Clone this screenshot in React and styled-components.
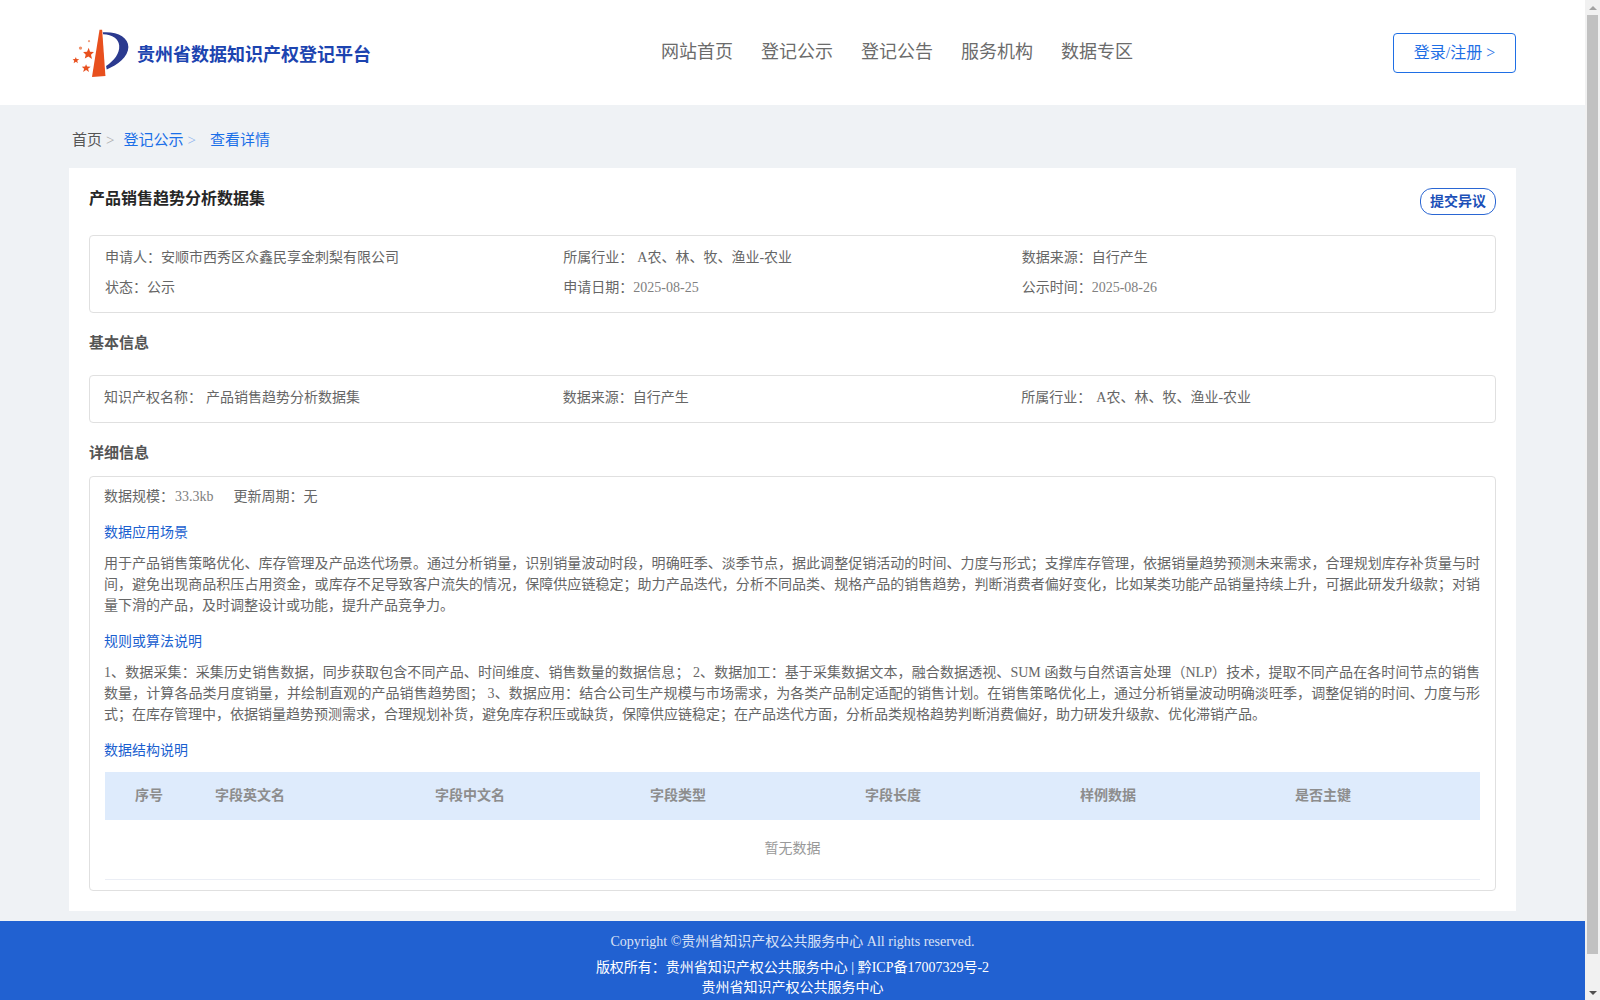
import React from "react";
import styled, { createGlobalStyle } from "styled-components";

const GlobalStyle = createGlobalStyle`
  html, body {
    margin: 0;
    padding: 0;
    background: #eff2f5;
    font-family: "Liberation Serif", "Noto Sans CJK SC", serif;
    font-size: 14px;
    color: #666;
    overflow: hidden;
  }
  * { box-sizing: border-box; }
`;

const Screen = styled.div`
  display: flex;
  width: 1600px;
  height: 1000px;
  overflow: hidden;
`;

const Page = styled.div`
  flex: 1;
  min-width: 0;
`;

// Fake scrollbar, the reference shows the classic browser one
const ScrollTrack = styled.div`
  width: 15px;
  flex: none;
  background: #f1f1f1;
  display: flex;
  flex-direction: column;
  align-items: center;
`;

const ScrollButton = styled.div`
  height: 15px;
  flex: none;
  display: flex;
  align-items: center;
  justify-content: center;
`;

const ScrollThumb = styled.div`
  width: 11px;
  height: 939px;
  background: #c1c1c1;
`;

const ScrollSpacer = styled.div`
  flex: 1;
`;

const Arrow = styled.div`
  width: 0;
  height: 0;
  border-left: 4px solid transparent;
  border-right: 4px solid transparent;
  border-bottom: ${(p) => (p.$down ? "0" : "4px solid #a3a3a3")};
  border-top: ${(p) => (p.$down ? "4px solid #505050" : "0")};
`;

const Header = styled.header`
  height: 105px;
  background: #fff;
  display: flex;
  align-items: center;
  padding: 0 69px 0 70px;
`;

const Brand = styled.div`
  display: flex;
  align-items: center;
  gap: 6px;
  width: 301px;
  flex: none;
`;

const BrandName = styled.span`
  font-size: 18px;
  line-height: 24px;
  font-weight: 700;
  color: #1c44b0;
  white-space: nowrap;
  margin-top: 5px;
`;

const Nav = styled.nav`
  display: flex;
  gap: 28px;
  margin: 0 0 2px 290px;
`;

const NavLink = styled.a`
  font-size: 18px;
  line-height: 24px;
  color: #6b6b6b;
  white-space: nowrap;
`;

const LoginButton = styled.button`
  margin-left: auto;
  width: 123px;
  height: 40px;
  padding: 0 0 3px;
  background: #fff;
  border: 1px solid #1f6fe5;
  border-radius: 4px;
  font-family: inherit;
  font-size: 16px;
  color: #1f6fe5;
`;

const Main = styled.main`
  padding: 0 69px;
`;

const Breadcrumb = styled.div`
  height: 63px;
  padding: 25px 0 0 3px;
  display: flex;
  font-size: 15px;
  line-height: 20px;
  white-space: nowrap;
  color: #555;
`;

const Crumb = styled.span`
  color: ${(p) => (p.$active ? "#1a6fe8" : "#555")};
`;

const CrumbSep = styled.span`
  margin: 0 ${(p) => p.$after}px 0 4px;
  color: ${(p) => (p.$active ? "#8fb4ee" : "#aaa")};
`;

const Card = styled.section`
  background: #fff;
  padding: 20px 20px 20px;
`;

const TitleRow = styled.div`
  display: flex;
  justify-content: space-between;
  align-items: flex-start;
  height: 27px;
  margin-bottom: 20px;
`;

const Title = styled.h1`
  margin: 0;
  font-size: 16px;
  line-height: 22px;
  font-weight: 700;
  color: #262626;
`;

const ObjectionButton = styled.button`
  width: 76px;
  height: 27px;
  padding: 0 0 4px;
  background: #fff;
  border: 1px solid #2a66d3;
  border-radius: 12px;
  font-family: inherit;
  font-size: 14px;
  font-weight: 700;
  color: #1c50b8;
`;

const InfoBox = styled.div`
  border: 1px solid #e0e0e0;
  border-radius: 4px;
  padding: ${(p) => p.$padding};
`;

const InfoGrid = styled.div`
  display: grid;
  grid-template-columns: repeat(3, 1fr);
`;

const InfoItem = styled.div`
  line-height: ${(p) => p.$line || 30}px;
  white-space: pre;
  color: #666;
`;

const Value = styled.span`
  color: ${(p) => (p.$num ? "#808080" : "#666")};
  margin-left: ${(p) => p.$gap || 0}px;
`;

const SectionHeading = styled.h2`
  margin: ${(p) => p.$top}px 0 ${(p) => p.$bottom}px;
  font-size: 15px;
  line-height: 20px;
  font-weight: 700;
  color: #555;
`;

const MetaRow = styled.div`
  display: flex;
  gap: 20px;
  line-height: 20px;
`;

const SubHeading = styled.h3`
  margin: ${(p) => p.$top}px 0 0;
  font-size: 14px;
  line-height: 20px;
  font-weight: 400;
  color: #1a5fd0;
`;

const Paragraph = styled.p`
  margin: 10px 0 0;
  line-height: 21px;
  text-align: justify;
  color: #666;
`;

const TableHead = styled.div`
  margin: 11px 0 0 1px;
  height: 48px;
  padding-bottom: 4px;
  background: #deebfc;
  display: grid;
  grid-template-columns: 110px 220px 215px 215px 215px 215px 1fr;
  align-items: center;
`;

const HeadCell = styled.div`
  font-weight: 700;
  color: #8d8d8d;
  padding-left: ${(p) => p.$indent || 0}px;
`;

const EmptyRow = styled.div`
  height: 60px;
  margin-left: 1px;
  padding-bottom: 6px;
  border-bottom: 1px solid #ebeef5;
  display: flex;
  align-items: center;
  justify-content: center;
  color: #999;
`;

const Footer = styled.footer`
  margin-top: 10px;
  background: #2161d1;
  padding: 11px 0 20px;
  text-align: center;
  color: #fff;
`;

const FooterLine = styled.div`
  line-height: 20px;
  margin-top: ${(p) => p.$top || 0}px;
  opacity: ${(p) => (p.$dim ? 0.82 : 1)};
`;

const Logo = () => (
  <svg width="62" height="52" viewBox="60 50 186 156">
    <path d="M150 57 L158 57 L168 198 L127 201 Z" fill="#e8501e" />
    <path
      d="M160 65 C205 62 238 80 238 110 C238 140 205 165 172 178 L170 168 C195 150 212 130 210 105 C208 85 190 72 161 71 Z"
      fill="#2b3a8f"
    />
    <path d="M117 112 L121 124 L133 125 L124 133 L127 146 L116 139 L105 145 L108 133 L100 125 L112 124 Z" fill="#e8501e" />
    <path d="M78 140 L80 146 L88 147 L82 152 L84 159 L78 155 L71 159 L73 152 L68 147 L75 146 Z" fill="#e8501e" />
    <path d="M109 162 L112 169 L123 170 L115 176 L118 186 L109 180 L100 186 L103 176 L96 170 L106 169 Z" fill="#e8501e" />
    <circle cx="92" cy="113" r="5" fill="#f0906a" />
    <circle cx="118" cy="92" r="3.5" fill="#f0a080" />
  </svg>
);

const navItems = ["网站首页", "登记公示", "登记公告", "服务机构", "数据专区"];
const tableHeads = ["序号", "字段英文名", "字段中文名", "字段类型", "字段长度", "样例数据", "是否主键"];

const App = () => {
  return (
    <Screen>
      <GlobalStyle />
      <Page>
        <Header>
          <Brand>
            <Logo />
            <BrandName>贵州省数据知识产权登记平台</BrandName>
          </Brand>
          <Nav>
            {navItems.map((item) => (
              <NavLink key={item}>{item}</NavLink>
            ))}
          </Nav>
          <LoginButton>登录/注册 &gt;</LoginButton>
        </Header>

        <Main>
          <Breadcrumb>
            <Crumb>首页</Crumb>
            <CrumbSep $after={9}>&gt;</CrumbSep>
            <Crumb $active>登记公示</Crumb>
            <CrumbSep $after={14} $active>&gt;</CrumbSep>
            <Crumb $active>查看详情</Crumb>
          </Breadcrumb>

          <Card>
            <TitleRow>
              <Title>产品销售趋势分析数据集</Title>
              <ObjectionButton>提交异议</ObjectionButton>
            </TitleRow>

            <InfoBox $padding="7px 15px 9px">
              <InfoGrid>
                <InfoItem>申请人：安顺市西秀区众鑫民享金刺梨有限公司</InfoItem>
                <InfoItem>所属行业：<Value $gap={4}>A农、林、牧、渔业-农业</Value></InfoItem>
                <InfoItem>数据来源：自行产生</InfoItem>
                <InfoItem>状态：公示</InfoItem>
                <InfoItem>申请日期：<Value $num>2025-08-25</Value></InfoItem>
                <InfoItem>公示时间：<Value $num>2025-08-26</Value></InfoItem>
              </InfoGrid>
            </InfoBox>

            <SectionHeading $top={20} $bottom={22}>基本信息</SectionHeading>

            <InfoBox $padding="0 15px 3px 14px">
              <InfoGrid>
                <InfoItem $line={43}>知识产权名称：<Value $gap={4}>产品销售趋势分析数据集</Value></InfoItem>
                <InfoItem $line={43}>数据来源：自行产生</InfoItem>
                <InfoItem $line={43}>所属行业：<Value $gap={5}>A农、林、牧、渔业-农业</Value></InfoItem>
              </InfoGrid>
            </InfoBox>

            <SectionHeading $top={20} $bottom={13}>详细信息</SectionHeading>

            <InfoBox $padding="10px 15px 10px 14px">
              <MetaRow>
                <span>数据规模：<Value $num $gap={1}>33.3kb</Value></span>
                <span>更新周期：无</span>
              </MetaRow>

              <SubHeading $top={16}>数据应用场景</SubHeading>
              <Paragraph>
                用于产品销售策略优化、库存管理及产品迭代场景。通过分析销量，识别销量波动时段，明确旺季、淡季节点，据此调整促销活动的时间、力度与形式；支撑库存管理，依据销量趋势预测未来需求，合理规划库存补货量与时间，避免出现商品积压占用资金，或库存不足导致客户流失的情况，保障供应链稳定；助力产品迭代，分析不同品类、规格产品的销售趋势，判断消费者偏好变化，比如某类功能产品销量持续上升，可据此研发升级款；对销量下滑的产品，及时调整设计或功能，提升产品竞争力。
              </Paragraph>

              <SubHeading $top={16}>规则或算法说明</SubHeading>
              <Paragraph>
                1、数据采集：采集历史销售数据，同步获取包含不同产品、时间维度、销售数量的数据信息； 2、数据加工：基于采集数据文本，融合数据透视、SUM 函数与自然语言处理（NLP）技术，提取不同产品在各时间节点的销售数量，计算各品类月度销量，并绘制直观的产品销售趋势图； 3、数据应用：结合公司生产规模与市场需求，为各类产品制定适配的销售计划。在销售策略优化上，通过分析销量波动明确淡旺季，调整促销的时间、力度与形式；在库存管理中，依据销量趋势预测需求，合理规划补货，避免库存积压或缺货，保障供应链稳定；在产品迭代方面，分析品类规格趋势判断消费偏好，助力研发升级款、优化滞销产品。
              </Paragraph>

              <SubHeading $top={16}>数据结构说明</SubHeading>
              <TableHead>
                {tableHeads.map((head, i) => (
                  <HeadCell key={head} $indent={i === 0 ? 30 : 0}>{head}</HeadCell>
                ))}
              </TableHead>
              <EmptyRow>暂无数据</EmptyRow>
            </InfoBox>
          </Card>
        </Main>

        <Footer>
          <FooterLine $dim>Copyright ©贵州省知识产权公共服务中心 All rights reserved.</FooterLine>
          <FooterLine $top={6}>版权所有：贵州省知识产权公共服务中心 | 黔ICP备17007329号-2</FooterLine>
          <FooterLine>贵州省知识产权公共服务中心</FooterLine>
        </Footer>
      </Page>

      <ScrollTrack>
        <ScrollButton><Arrow /></ScrollButton>
        <ScrollThumb />
        <ScrollSpacer />
        <ScrollButton><Arrow $down /></ScrollButton>
      </ScrollTrack>
    </Screen>
  );
};

export default App;
